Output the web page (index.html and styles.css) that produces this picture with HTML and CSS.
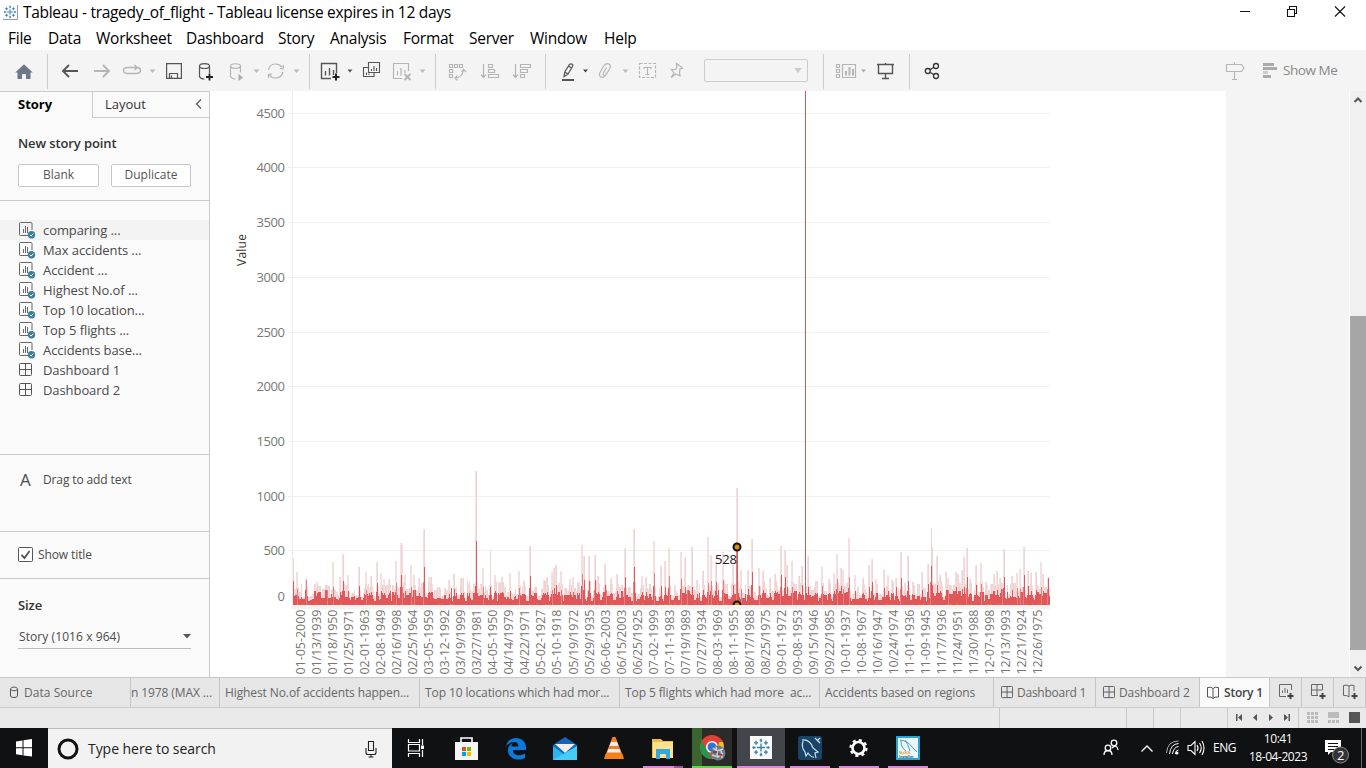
FILE: index.html
```html
<!DOCTYPE html>
<html lang="en">
<head>
<meta charset="utf-8">
<title>Tableau - tragedy_of_flight</title>
<link rel="stylesheet" href="styles.css">
</head>
<body>
<svg width="0" height="0" class="defs">
  <symbol id="sheet" viewBox="0 0 17 17"><path d="M10 13.5H1.5Q.5 13.5 .5 12.5V1.500Q.5.5 1.500.5H12Q13 .5 13 1.500V8" fill="none" stroke="#666"/><path d="M4.500 7v4M6.500 4v7M8.500 5v6" stroke="#666" fill="none"/><circle cx="12.500" cy="12.800" r="3.700" fill="#3a7f9f"/><path d="M10.900 12.800l1.200 1.300 2.200-2.500" stroke="#fff" fill="none"/></symbol>
  <symbol id="dash" viewBox="0 0 14 14"><path d="M1.500.5h10Q12.500.5 12.500 1.500v10q0 1-1 1h-10q-1 0-1-1v-10q0-1 1-1zM6.500.5v12M.5 6.500h12" fill="none" stroke="#555"/></symbol>
  <symbol id="book" viewBox="0 0 14 14"><path d="M.5 1.500q4-1 5.500 1q1.500-2 5.500-1v9.500q-4-.5-5.500 1.500q-1.500-2-5.500-1.500zM6 2.500v10" fill="none" stroke="#555"/></symbol>
  <symbol id="mark" viewBox="0 0 15 15"><path d="M7.500 4.500v6M4.500 7.500h6M7.500 1v2.500M7.500 11.500V14M1 7.500h2.500M11.500 7.500H14M3.800 2.500v3M2.300 4h3M11.200 2.500v3M9.700 4h3M3.800 9.500v3M2.300 11h3M11.200 9.500v3M9.700 11h3M6.500 2h2M6.500 13h2M2 6.500v2M13 6.500v2" stroke="#3483b0" fill="none"/></symbol>
</svg>
<header class="titlebar">
  <svg class="appmark" width="15" height="15"><rect width="15" height="15" fill="#fafafa"/><path d="M14.500 0v14.500H0" fill="none" stroke="#999"/><use href="#mark" width="14" height="14"/></svg>
  <span class="caption">Tableau - tragedy_of_flight - Tableau license expires in 12 days</span>
  <svg width="146" height="25" viewBox="1220 0 146 25"><path d="M1240 11.500h10M1287.500 9.500h7v7h-7zM1289.500 9v-2.500h7v7h-2M1335 6.500l10 10M1345 6.500l-10 10" fill="none" stroke="#111" stroke-width="1.100"/></svg>
</header>
<nav class="menu"><span class="m1">File</span><span class="m2">Data</span><span class="m3">Worksheet</span><span class="m4">Dashboard</span><span class="m5">Story</span><span class="m6">Analysis</span><span class="m7">Format</span><span class="m8">Server</span><span class="m9">Window</span><span>Help</span></nav>
<div class="toolbar">
  <svg width="48" height="41" viewBox="0 50 48 41"><path d="M24 64.300l8.700 8.200H30.500V79H26v-5h-4v5h-4.500v-6.500h-2.200z" fill="#6b7889"/><path class="sep" d="M47.500 54v35"/></svg>
  <svg width="262" height="41" viewBox="48 50 262 41">
    <g fill="none" stroke="#555" stroke-width="1.900"><path d="M78 71H63.500M69 65l-6 6 6 6"/></g>
    <g class="off"><path stroke-width="1.800" d="M94 71h15M103 65l6 6-6 6"/><path stroke-width="1.400" d="M134 67.500h-6q-4.500 0-4.500 3t4.500 3h8q4.500 0 4.500-3.200 0-2.500-3.500-2.800h-3M134.500 65l2.700 2.500-2.700 2.500"/><path d="M230.500 66.500v10q1 2 5 2.500M230.500 66c0-3 10-3 10 0s-10 3-10 0M240.500 66v6.500"/><path d="M268.500 70q1-6 7-6 4 0 6.500 3M283 72q-1.500 6-7.500 6-4 0-6-3M280 68.500l3 .5.500-4M272 74l-3.500.5v3.500"/></g>
    <path d="M238.500 74v7l4.500-3.500z" fill="#aaa"/>
    <g fill="#bbb"><path d="M149.500 69.500h6l-3 3.500zM253.500 69.500h6l-3 3.500zM293.500 69.500h6l-3 3.500z"/></g>
    <g fill="none" stroke="#555" stroke-width="1.200"><path d="M166.600 63.600h14.800v14.800h-14.800zM169.500 78v-4.500h8V78M171.500 78v-2.500"/><path d="M199.500 66v10.500q1 2.500 5 2.500M199.500 66c0-3.300 10-3.300 10 0s-10 3.300-10 0M209.500 66v7"/></g>
    <path d="M209.500 73.500v7M206 77h7" stroke="#222" stroke-width="1.800"/><path class="sep" d="M309.500 54v35"/>
  </svg>
  <svg width="126" height="41" viewBox="310 50 126 41">
    <path d="M331 78.500h-9.500v-15h15V73M325.500 71v4.500M329.500 68v7.500M333.500 70v5" fill="none" stroke="#555" stroke-width="1.400"/><path d="M336 73.500v7M332.500 77h7" stroke="#222" stroke-width="2"/><path d="M347.500 69.500h5l-2.500 3z" fill="#555"/>
    <path d="M368.500 62.500h11v10h-11zM368 67.500h-4.500v9h10.500v-4M371.500 71v-2M374 71v-5M376.500 71v-3M366.500 75v-2.500M369 75v-1.500" fill="none" stroke="#555" stroke-width="1.100"/>
    <g class="off"><path d="M402 78.500h-8.500v-15h15V71M397.500 71v4.500M401 68v7.500M405 70v3"/><path stroke-width="2" d="M404.500 74l6 6M410.500 74l-6 6"/></g><path d="M419.500 69.500h6l-3 3.500z" fill="#bbb"/><path class="sep" d="M435.500 54v35"/>
  </svg>
  <svg width="111" height="41" viewBox="436 50 111 41"><g class="off"><path d="M449.500 64.500h3v3h-3zM454.500 64.500h3v3h-3zM459.500 64.500h3v3h-3zM449.500 69.500h3v3h-3zM449.500 74.500h3v3h-3zM455 78q7 0 8.500-8M461.500 72l2-2.500 2.500 2.500M457.500 75.500l-2.500 2.500 2.500 2.500"/><path d="M483.500 64v12.500M481 74.500l2.500 3 2.500-3M488.500 64.500h4v3h-4zM488.500 69.500h6v3h-6zM488.500 74.500h10v3h-10zM515.500 64v12.500M513 74.500l2.500 3 2.500-3M520.500 64.500h10v3h-10zM520.500 69.500h7v3h-7zM520.500 74.500h4v3h-4z"/></g><path class="sep" d="M545.500 54v35"/></svg>
  <svg width="157" height="41" viewBox="547 50 157 41"><path d="M564 76.500l.8-4.500 4.700-7.500q1.500-1.500 3.200.2v1.500l-4.700 7.800zM564.800 72l3.200 2M568.500 66l3.500 2.200" fill="none" stroke="#555" stroke-width="1.200"/><path d="M562 79h12v2h-12z" fill="#555"/><path d="M583 69.500h5l-2.500 3z" fill="#444"/><g class="off"><path d="M609.500 69l-4.500 7q-1.500 2-4 1-2.500-1.500-1-4.500l4-7q2-2.500 5-1.500 2.500 2 .8 4.500l-4 6.500q-1.500 1.300-2.500 0-.5-1 .3-2.500l3-5"/><path stroke-dasharray="3 1.500" d="M639.500 63.500h16v14h-16z"/><path d="M644 69v-1.500h7V69M647.500 67.500v7M645.500 74.500h4"/><path d="M676.500 63.500l6 4.500-2.500 1-.5 3.500.5 3.500-4-2-5 3.500 3-4.500-2.500-3.500h4l1.500-2.500z"/></g><path d="M622.500 69.500h6l-3 3.500z" fill="#bbb"/></svg>
  <div class="fit"><svg width="8" height="6"><path d="M0 0h8L4 5z" fill="#ccc"/></svg></div>
  <svg width="401" height="41" viewBox="808 50 401 41"><path class="sep" d="M823.500 54v35M909.500 54v35"/><g class="off"><path d="M842.500 64.500h13v13h-13zM836.500 64.500h3v3h-3zM836.500 69.500h3v3h-3zM836.500 74.500h3v3h-3z"/><path d="M846 71v4.500M849.500 67v8.500M853 69v6.500" stroke-width="2"/></g><path d="M861 69.500h5l-2.500 3z" fill="#aaa"/><path d="M877 64.500h17M878.500 65v8.500h14V65M885.500 63v2M885.500 74v4M882 78.500h7" fill="none" stroke="#555" stroke-width="1.400"/><g fill="none" stroke="#333" stroke-width="1.300"><circle cx="927.800" cy="71" r="2.500"/><circle cx="936" cy="66" r="2.500"/><circle cx="936" cy="76" r="2.500"/><path d="M930 69.700l4-2.500M930 72.300l4 2.500"/></g></svg>
  <svg width="74" height="41" viewBox="1209 50 74 41"><path class="off" d="M1226.500 64.500h15l2.500 3.500-2.500 3.500h-15zM1234.500 62v2.500M1234.500 71.500v8M1232 79.500h5"/><path d="M1263 63h11v3h-11zM1263 67h14v3h-14zM1263 75h8v3h-8z" fill="#aaa"/><path d="M1263 71h5v3h-5z" fill="#ccc"/></svg>
  <span class="showme">Show Me</span>
</div>
<main class="work">
  <aside>
    <div class="paneltabs"><b>Story</b><span>Layout</span><svg width="10" height="12"><path d="M7 1.500L2.500 6l4.500 4.500" stroke="#555" fill="none" stroke-width="1.200"/></svg></div>
    <section class="new"><h2>New story point</h2><div class="btns"><button class="blank">Blank</button><button>Duplicate</button></div></section>
    <section class="sheets">
      <div class="row sel"><svg><use href="#sheet" width="17" height="17"/></svg>comparing ...</div>
      <div class="row"><svg><use href="#sheet" width="17" height="17"/></svg>Max accidents ...</div>
      <div class="row"><svg><use href="#sheet" width="17" height="17"/></svg>Accident ...</div>
      <div class="row"><svg><use href="#sheet" width="17" height="17"/></svg>Highest No.of ...</div>
      <div class="row"><svg><use href="#sheet" width="17" height="17"/></svg>Top 10 location...</div>
      <div class="row"><svg><use href="#sheet" width="17" height="17"/></svg>Top 5 flights ...</div>
      <div class="row"><svg><use href="#sheet" width="17" height="17"/></svg>Accidents base...</div>
      <div class="row"><svg><use href="#dash" y="1" width="14" height="14"/></svg>Dashboard 1</div>
      <div class="row"><svg><use href="#dash" y="1" width="14" height="14"/></svg>Dashboard 2</div>
    </section>
    <section class="drag"><span class="a">A</span>Drag to add text</section>
    <section class="show"><svg width="15" height="15"><rect x=".5" y=".5" width="14" height="14" rx="1" fill="#fff" stroke="#555"/><path d="M3.500 8l3 3 5-7" stroke="#555" stroke-width="1.800" fill="none"/></svg>Show title</section>
    <section class="size"><h2>Size</h2><div class="select">Story (1016 x 964)<svg width="8" height="5"><path d="M0 0h8L4 4.500z" fill="#555"/></svg></div></section>
  </aside>
  <svg id="chart" width="1016" height="586" viewBox="210 91 1016 586"></svg>
  <div class="beyond"></div>
  <div class="scroll"><svg width="16" height="17"><path d="M4.500 11l3.500-3.500 3.500 3.500" fill="none" stroke="#555" stroke-width="2"/></svg><div class="thumb"></div><svg width="16" height="17"><path d="M4.500 6.500l3.500 3.500 3.500-3.500" fill="none" stroke="#555" stroke-width="2"/></svg></div>
</main>
<div class="tabs">
  <div class="tab t0"><svg width="10" height="13"><path d="M1.500 3v7q0 1.500 3.500 1.500T8.500 10V3M1.500 3c0-2.500 7-2.500 7 0s-7 2-7 0" fill="none" stroke="#555"/></svg>Data Source</div>
  <div class="tab t1">n 1978 (MAX ...</div><div class="tab t2">Highest No.of accidents happen...</div><div class="tab t3">Top 10 locations which had mor...</div><div class="tab t4">Top 5 flights which had more&nbsp; ac...</div><div class="tab t5">Accidents based on regions</div>
  <div class="tab t6"><svg width="12" height="14"><use href="#dash" width="13" height="13"/></svg>Dashboard 1</div><div class="tab t7"><svg width="12" height="14"><use href="#dash" width="13" height="13"/></svg>Dashboard 2</div>
  <div class="tab t8"><svg width="13" height="14"><use href="#book" width="14" height="14"/></svg>Story 1</div>
  <div class="tab add"><svg width="17" height="17"><path d="M7 12.500H.5v-12h12V6M3.500 9V6.500M6 9V4M8.500 9V5.500" fill="none" stroke="#666"/><path d="M11.500 9v6M8.500 12h6" stroke="#444" stroke-width="2"/></svg></div>
  <div class="tab add"><svg width="17" height="17"><path d="M7 11.500H.5V.5h11V6M6 .5v11M.5 6h11" fill="none" stroke="#666"/><path d="M11.500 9v6M8.500 12h6" stroke="#444" stroke-width="2"/></svg></div>
  <div class="tab add"><svg width="17" height="17"><path d="M6 13q-1.500-2-5.500-1.500V1.500q4-1 5.500.5 1.500-1.500 5-.5V7M6 2v11" fill="none" stroke="#666"/><path d="M11.500 9v6M8.500 12h6" stroke="#444" stroke-width="2"/></svg></div>
</div>
<div class="status"><svg width="367" height="20" viewBox="999 708 367 20"><path d="M999.500 708v20M1126.500 708v20M1153.500 708v20M1180.500 708v20M1227.500 708v20M1298.500 708v20" stroke="#c8c8c8"/><g fill="#555"><path d="M1236 714h1.500v7h-1.500zM1242 714v7l-4-3.500zM1257 714v7l-4-3.500zM1269 714v7l4-3.500zM1284 714v7l4-3.500zM1288.500 714h1.500v7h-1.500zM1349 712h11v11h-11z"/></g><path d="M1307 712h3v3h-3zM1311 712h3v3h-3zM1315 712h3v3h-3zM1307 716h3v3h-3zM1311 716h3v3h-3zM1315 716h3v3h-3zM1307 720h3v3h-3zM1311 720h3v3h-3zM1315 720h3v3h-3zM1328 712h11v6h-11zM1328 720h3v3h-3zM1332 720h3v3h-3zM1336 720h3v3h-3z" fill="#bbb"/></svg></div>
<footer class="taskbar">
  <svg width="48" height="40" viewBox="0 728 48 40"><path d="M16 741.500l6.500-1v6.800H16zM23.500 740.300l8.500-1.200v8.200h-8.500zM16 748.300h6.500v6.900l-6.500-.9zM23.500 748.300h8.500v8.300l-8.500-1.200z" fill="#fff"/></svg>
  <div class="search"><svg width="22" height="22"><circle cx="11" cy="11" r="9" fill="none" stroke="#111" stroke-width="3"/></svg><span>Type here to search</span><svg width="12" height="18"><path d="M3.500 1.500h5v9h-5zM1 8v4.500q0 2 2 2h6q2 0 2-2V8M6 14.500v2.500M3.500 17h5" fill="none" stroke="#222" stroke-width="1.100"/></svg></div>
  <svg width="707" height="40" viewBox="392 728 707 40">
    <path d="M408.500 739v3.500h11V739M408.500 757v-3.500h11v3.500M408.500 744.500h11v6.500h-11zM422.500 739v6M422.500 750v7" fill="none" stroke="#fff" stroke-width="1.200"/><path d="M421 745.500h3v3.500h-3z" fill="#fff"/>
    <path d="M461 742v-4h11v4" fill="none" stroke="#fff" stroke-width="1.600"/><path d="M455 742h23v18h-23z" fill="#f5f5f5"/><path fill="#e74c25" d="M462 747h4v4h-4z"/><path fill="#7db902" d="M467 747h4v4h-4z"/><path fill="#00a3ed" d="M462 752h4v4h-4z"/><path fill="#ffb800" d="M467 752h4v4h-4z"/>
    <path d="M506 747c1-12 19-12 20 0v3h-13c0 6 7 6.500 12 3.500v4.500c-8 4-17 0-17-7.500 0-4 2-6 5-7.500-1 1-1.500 2-1.500 3.500h7c0-6-9-6-13 .5z" fill="#087bdc"/>
    <path d="M553 745l12-8 12 8v14h-24z" fill="#1267b8"/><path d="M555 744h20l-10 9z" fill="#eee"/><path d="M553 746l12 9 12-9v14h-24z" fill="#29b3ef"/><path d="M553 760l24-14v14z" fill="#45cdfa"/>
    <path d="M612.500 737h3l7 18h-17z" fill="#f08020"/><path d="M611 742h6l1.500 4h-9zM608.500 749h11l1.300 3.500h-13.800z" fill="#eee"/><path d="M605.500 754h17l1.500 5h-20z" fill="#f58212"/>
    <path d="M652 739h9l2 2h10v17h-21z" fill="#e9bd4a"/><path d="M653 742h20v16h-20z" fill="#ffe28b"/><path d="M656 749h14v10h-4v-5h-6v5h-4z" fill="#31a8df"/><path d="M643 766h31v2h-31z" fill="#df83db"/><path d="M674 766h9v2h-9z" fill="#965a94"/>
    <path d="M692 728h10v38h-10z" fill="#3b6431"/><path d="M702 728h30v38h-30z" fill="#2d2b29"/><path d="M692 766h40v2h-40z" fill="#50df3d"/><circle cx="712" cy="747" r="12" fill="#e34133"/><path d="M701.600 741L707 750l5 9c-11 0-14-11-10.400-18z" fill="#21964c"/><path d="M712 759l6-10 1-7h4c3 9-3 17-11 17z" fill="#f5c51c"/><circle cx="712" cy="747" r="6" fill="#fff"/><circle cx="712" cy="747" r="4.500" fill="#2f71df"/><circle cx="718" cy="753" r="7.500" fill="#6c7b86"/><path d="M713 748l4 3 6-2M712 755l6 2 5-4M716 747l2 11M721 750l1 8" stroke="#cad3da" fill="none" stroke-width="1.500"/><path d="M713 752h4M718 754l4 1" stroke="#9d3838" stroke-width="2"/>
    <path d="M737 728h48v38h-48z" fill="#42464a"/><path d="M737 766h48v2h-48z" fill="#df83db"/><path d="M750 736h22v23h-22z" fill="#fafafa"/><use href="#mark" x="751" y="737" width="20" height="21"/>
    <rect x="798" y="736" width="24" height="24" rx="3" fill="#174468"/><path d="M802 740q8-1 11 8l5 4-3 1 1 5M803 741q-2 6 2 11l1 4 2-3q4 5 6 4M815 738l5 5M820 738l-3 3" fill="none" stroke="#d0e0ed" stroke-width="1.200"/><path d="M790 766h40v2h-40zM839 766h40v2h-40zM888 766h40v2h-40z" fill="#df83db"/>
    <circle cx="858.500" cy="748" r="6" fill="none" stroke="#fff" stroke-width="2.600"/><circle cx="858.500" cy="748" r="8" fill="none" stroke="#fff" stroke-width="2.200" stroke-dasharray="3.100 3.183"/>
    <rect x="897" y="737" width="22" height="22" fill="#eaf7fc" stroke="#27a5d2" stroke-width="2"/><path d="M900 740q8 1 12 7l5 5M901 741q0 7 5 10M905 740q3 4 5 11M913 748l3 3" fill="none" stroke="#4b9fbf"/><text x="899" y="754" font-size="3.500" fill="#ea9b27" font-family="Open Sans" font-weight="700">MySQL</text><text x="899" y="757.500" font-size="3.500" fill="#165b80" font-family="Open Sans" font-weight="700">Installer</text>
  </svg>
  <svg width="114" height="40" viewBox="1099 728 114 40"><g fill="none" stroke="#fff" stroke-width="1.300"><circle cx="1108" cy="748" r="2.800"/><circle cx="1114" cy="743" r="2.800"/><path d="M1104 755q0-4.500 4-4.500t4 4.500M1112 748q5-4.500 6 2M1141.500 751.500l5.500-5.500 5.500 5.500"/><path stroke="#aaa" stroke-width="1" d="M1166.500 753q1-12 12-12"/><g stroke-width="1"><path d="M1169.500 754q1-10 9-10.500M1172.500 754q1-7 6-7.500M1175.500 754q0-4 3-4"/></g><path stroke-width="1.100" d="M1188 745.500h3l4-4v13l-4-4h-3zM1197 745q2 3 0 6M1199.500 743q3.500 5 0 10M1202 741q4 7 0 14"/></g><circle cx="1177" cy="753" r="1.500" fill="#fff"/></svg>
  <span class="lang">ENG</span><div class="clock"><span>10:41</span><span class="date">18-04-2023</span></div>
  <svg width="52" height="40" viewBox="1314 728 52 40"><path d="M1325 740h16v12h-10l-3 3v-3h-3z" fill="#fff"/><path d="M1328 743.500h10M1328 746.500h10M1328 749.500h6" stroke="#111"/><circle cx="1340.500" cy="755" r="8" fill="#343434" stroke="#888"/><text x="1337" y="760" font-size="13" fill="#fff" font-family="Open Sans">2</text><path d="M1361.500 728v40" stroke="#666"/></svg>
</footer>
<script src="chart.js"></script>
</body>
</html>
```
FILE: styles.css
```css
*{box-sizing:border-box}
body{margin:0;width:1366px;height:768px;overflow:hidden;background:#fff;font:13px "Open Sans","Noto Sans",sans-serif;color:#4a4a4a}
svg{display:block;flex:none}
.defs{position:absolute}
.titlebar,.menu,.toolbar,.work,.tabs,.taskbar{display:flex}
.titlebar{height:25px;color:#000;align-items:center}
.appmark{margin:0 5px 0 3px}
.caption{font-size:15.500px;letter-spacing:-.3px;flex:1;white-space:nowrap;padding-bottom:1px}
.menu{height:25px;padding-left:8px;color:#000;font-size:15.500px;line-height:27px;letter-spacing:-.25px}
.m1{width:40px}.m2{width:48px}.m3{width:90px}.m4{width:92px}.m5{width:52px}.m6{width:73px}.m7{width:66px}.m8{width:61px}.m9{width:74px}
.toolbar{height:41px;background:#f4f4f4;align-items:center}
.sep{stroke:#ccc;fill:none}
.off{fill:none;stroke:#b5b5b5;stroke-width:1.200}
.fit{width:104px;height:23px;border:1px solid #ccc;border-radius:2px;display:flex;align-items:center;justify-content:flex-end;padding-right:5px}
.showme{color:#888;font-size:13.500px;letter-spacing:-.45px;white-space:nowrap;line-height:16px;padding-bottom:2px}
.work{height:586px}
aside{width:210px;background:#fafafa;border-right:1px solid #c9c9c9;border-top:1px solid #ccc}
.paneltabs{display:flex;height:26px;line-height:24px;font-size:13px;color:#333}
.paneltabs b{width:92px;padding-left:18px;color:#000}
.paneltabs span{flex:1;border-left:1px solid #ccc;border-bottom:1px solid #ccc;padding-left:12px}
.paneltabs svg{width:15px;height:26px;padding-top:6px;border-bottom:1px solid #ccc}
section{border-bottom:1px solid #c9c9c9}
h2{margin:0;font-size:13px;font-weight:600;line-height:18px;color:#333;letter-spacing:-.1px}
.new{height:83px;padding:16px 18px 0}
.btns{display:flex;gap:12px;margin-top:12px}
button{width:80px;height:23px;background:#fff;border:1px solid #c8c8c8;border-radius:2px;font:12px "Open Sans",sans-serif;color:#555;padding:0 0 2px}
.blank{width:81px}
.sheets{height:254px;padding-top:19px}
.row{height:20px;display:flex;align-items:center;padding-left:19px;font-size:13px;letter-spacing:-.08px;white-space:pre}
.row svg{width:17px;height:17px;margin-right:7px}
.sel{background:#f3f3f3}
.drag{height:77px;display:flex;padding-top:14px;line-height:22px;font-size:12px;letter-spacing:-.12px}
.a{font-size:17px;width:23px;margin-left:20px}
.show{height:47px;display:flex;align-items:center;gap:5px;padding:0 0 1px 18px;font-size:12px;letter-spacing:-.1px}
.size{padding:17px 18px 0;border:0}
.select{display:flex;justify-content:space-between;align-items:center;border-bottom:1px solid #bbb;height:24px;margin-top:11px;font-size:12px;width:173px;padding-left:1px;letter-spacing:.08px}
.beyond{width:123px;background:#f4f4f4}
.scroll{width:17px;background:#f0f0f0;border-left:1px solid #fff;display:flex;flex-direction:column}
.thumb{height:334px;margin-top:208px;margin-bottom:10px;background:#a6a6a6}
.tabs{height:31px;background:#e6e6e6;border-top:1px solid #c8c8c8;border-bottom:1px solid #ccc}
.tab{display:flex;align-items:center;border-right:1px solid #c5c5c5;padding-left:5px;font-size:12px;letter-spacing:-.1px;color:#666;white-space:nowrap;overflow:hidden;flex:none}
.tab svg{margin-right:4px}
.t0{width:131px;padding-left:9px;letter-spacing:.05px}.t1{width:89px;padding-left:0}.t2,.t3,.t4{width:200px}.t5{width:174px}.t6{width:102px;padding-left:7px;letter-spacing:-.25px}.t7{width:104px;padding-left:7px}
.t0 svg{margin-right:5px}
.t8{width:70px;background:#fafafa;font-weight:600;color:#444;padding-left:7px;letter-spacing:-.2px}
.t8 svg{margin-right:4px}
.add{width:32px;padding-left:9px}
.status{height:20px;background:#eaeaea;display:flex;justify-content:flex-end}
.taskbar{height:40px;background:#101112}
.search{width:344px;background:#f2f2f2;border-top:1px solid #bbb;display:flex;align-items:center;padding:0 15px 0 9px;color:#222;font-size:14px;letter-spacing:-.05px}
.search span{flex:1;margin-left:9px}
.lang{width:34px;color:#fff;font-size:12px;line-height:39px}
.clock{width:62px;margin-right:5px;display:flex;flex-direction:column;align-items:center;color:#fff;font-size:12px;line-height:18px;padding-top:2px}
.clock,.lang{letter-spacing:-.45px}
.axis{fill:#777;font:13px "Open Sans",sans-serif}
.date-label{fill:#777;font:12.500px "Open Sans",sans-serif}
.value{fill:#333;font:12px "Open Sans",sans-serif}
.note{fill:#222;font:13px "Open Sans",sans-serif}
```
FILE: chart.js
```js
const parts = [];
const base = 605, step = 54.7;
const rect = (x, y, w, h, fill) => parts.push(`<rect x="${x}" y="${y}" width="${w}" height="${h}" fill="${fill}"/>`);
rect(210, 91, 1016, 586, '#fff');
for (let i = 1; i < 10; i++) {
  const y = Math.round(base - i * step) + (i === 1 ? 0 : 0.5);
  rect(288, Math.floor(y), 762, 1, '#f0f0f0');
  parts.push(`<text class="axis" x="285" y="${Math.floor(y) + 5}" text-anchor="end" textLength="${i === 1 ? 21.500 : 28.500}">${i * 500}</text>`);
}
parts.push('<text class="axis" x="285" y="601" text-anchor="end">0</text>');
parts.push('<text class="value" transform="translate(246 266) rotate(-90)" textLength="32">Value</text>');
rect(292, 91, 1, 518, '#eee');
rect(292, 605, 758, 4, '#f3f3f3');

// Each spike is "x,y" in thirds of a pixel, relative to its panel's origin.
const panels = [
  [290, '10,295 22,337 48,355 82,367 131,307 160,282 152,350 176,345 209,321 229,335 243,348 263,307 274,338 282,357 298,357 318,303 333,249 336,255 345,345 363,316 374,345 387,353 404,207 418,350 424,352 478,360 494,343 515,354 521,354 534,372 558,33 579,324 600,273 616,345 627,369 636,350 662,340 687,333 703,363 722,258',
   '10,362 22,387 48,360 82,400 131,393 160,363 209,378 263,369 318,369 333,345 404,321 484,385 494,387 558,243 600,384 722,348 579,381 662,392 687,384'],
  [540, '12,360 22,350 36,335 42,325 48,315 63,333 90,357 101,350 116,370 128,255 134,288 147,288 165,285 174,348 195,312 215,354 231,342 256,264 284,207 306,348 318,350 343,243 363,318 376,303 387,264 407,375 424,276 435,291 456,261 473,360 489,333 504,231 513,285 530,306 551,276 580,315 591,84 605,330 624,330 636,237 657,324 670,333 690,353 705,342 725,258 735,270 743,315',
   '48,375 128,342 134,360 147,363 165,360 195,375 256,351 284,321 343,339 363,378 387,348 424,357 504,369 513,363 530,366 551,360 580,375 591,265 636,336 657,378 725,345 735,351'],
  [790, '6,303 27,348 38,318 56,288 80,362 98,321 118,357 132,339 141,282 153,323 160,330 177,234 196,345 219,354 237,315 247,297 260,357 282,330 294,345 306,360 318,354 333,276 345,370 356,288 369,366 396,336 414,312 424,204 428,262 442,288 450,345 468,336 475,354 498,336 506,343 516,330 523,291 531,264 541,357 558,315 574,309 590,366 613,342 622,333 632,354 642,267 666,348 682,339 692,327 702,261 714,333 723,339 740,336 754,306 760,342 774,354',
   '6,384 38,375 98,378 141,357 153,378 177,351 247,366 282,384 318,381 333,354 356,363 414,372 424,318 428,375 442,375 498,381 523,381 531,351 558,375 574,372 642,351 666,390 682,384 702,345 714,378 774,354']
];
let seed = 29;
const random = () => { seed = (seed * 16807) % 2147483647; return seed / 2147483647; };
const pale = {}, strong = {}, faint = {};
for (let x = 293; x < 1050;) {
  const run = 1 + Math.floor(random() * 3);
  const p = 8 + Math.round(Math.pow(random(), 1.4) * 14);
  const s = Math.max(4, Math.round(p * (.35 + random() * .4)));
  for (let k = 0; k < run && x < 1050; k++, x++) { pale[x] = p; strong[x] = s; }
}
for (const [origin, light, dark] of panels) {
  for (const [list, target] of [[light, pale], [dark, strong]]) {
    for (const item of list.split(' ')) {
      const [px, py] = item.split(',').map(Number);
      const x = Math.floor(origin + px / 3), h = Math.round(145 - py / 3);
      target[x] = Math.max(target[x] || 0, h);
      if (target === pale) {
        strong[x] = Math.max(strong[x], Math.min(18, Math.round(h * .45)));
        if (x > 293 && py !== 273 && py !== 204) faint[x - 1] = h;
        const skirt = 12 + Math.round(random() * 12);
        for (const d of [-1, 1]) if (pale[x + d]) {
          pale[x + d] = Math.max(pale[x + d], skirt);
          strong[x + d] = Math.max(strong[x + d], Math.round(skirt * .5));
        }
      } else if (x > 294 && h > 20) {
        strong[x - 1] = Math.max(strong[x - 1], h > 50 ? Math.round(h * .3) : Math.round(h * .6));
      }
    }
  }
}
for (let x = 293; x < 1050; x++) {
  if (faint[x]) rect(x, base - faint[x], 1, faint[x], '#f4e0e1');
  rect(x, base - pale[x], 1, pale[x], x % 3 ? '#efd4d5' : '#f3dddd');
  rect(x, base - strong[x], 1, strong[x], strong[x] > 14 && strong[x] < 40 && x % 3 === 0 ? '#e87d7f' : '#e15759');
  if (random() > .8) rect(x, base - 1, 1, 1, '#e87532');
}
rect(736, 549, 1, 56, '#e87d7f');
rect(805, 91, 1, 514, '#d35a5f');
parts.push('<circle cx="737" cy="547" r="3.500" fill="#e28e00" stroke="#111" stroke-width="2"/><path d="M732.500 605a4.500 4.500 0 0 1 9 0z" fill="#111"/><path d="M734.500 605a2.500 2.500 0 0 1 5 0z" fill="#e28e00"/><text class="note" x="715" y="564" textLength="22">528</text>');
const dates = '01-05-2000 01/13/1939 01/18/1950 01/25/1971 02-01-1963 02-08-1949 02/16/1998 02/25/1964 03-05-1959 03-12-1992 03/19/1999 03/27/1981 04-05-1950 04/14/1979 04/22/1971 05-02-1927 05-10-1918 05/19/1972 05/29/1935 06-06-2003 06/15/2003 06/25/1925 07-02-1999 07-11-1983 07/19/1989 07/27/1934 08-03-1969 08-11-1955 08/17/1988 08/25/1975 09-01-1972 09-08-1953 09/15/1946 09/22/1985 10-01-1937 10-08-1967 10/16/1947 10/24/1974 11-01-1936 11-09-1945 11/17/1936 11/24/1951 11/30/1988 12-07-1998 12/13/1993 12/21/1924 12/26/1975'.split(' ');
dates.forEach((date, i) => parts.push(`<text class="date-label" transform="translate(${305 + i * 16.030} 674.500) rotate(-90)" textLength="65">${date}</text>`));
document.getElementById('chart').innerHTML = parts.join('');
```
